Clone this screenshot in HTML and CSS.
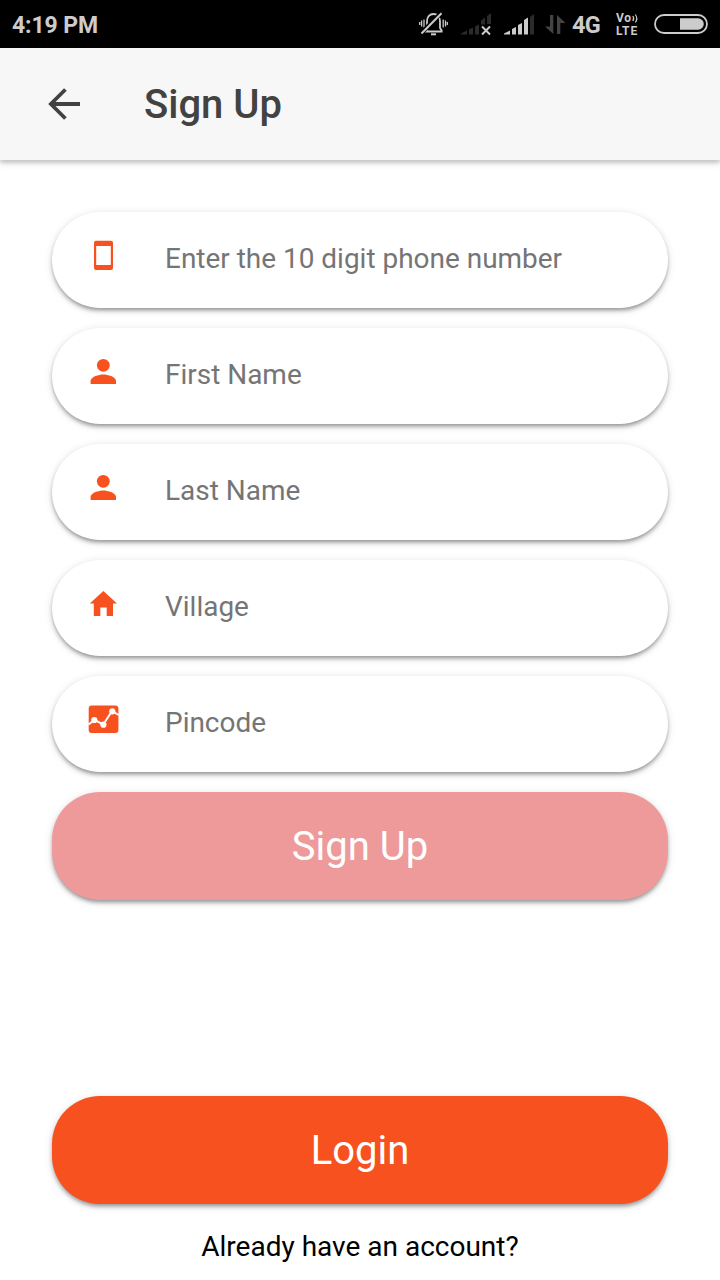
FILE: index.html
```html
<!DOCTYPE html>
<html lang="en">
<head>
<meta charset="utf-8">
<title>Sign Up</title>
<link rel="stylesheet" href="styles.css">
</head>
<body>
<div class="screen">
  <div class="status">
    <span class="time">4:19 PM</span>
    <div class="indicators">
      <svg class="bell" width="30" height="24" viewBox="0 0 30 24" fill="none" stroke="#ccc" stroke-width="1.800">
        <path d="M5.500 19.500h18M8 19V9.500C8 5 10.500 2 14.500 2s6.500 3 6.500 7.500V16l2 3"/>
        <path d="M12 22.300h5" stroke-width="2"/>
        <path d="M5 7.500v8M24.200 7.500v8M2.600 8.500v6M26.500 8.500v6M.7 10v3M28.300 10v3" stroke-width="1.300"/>
        <path d="M3 20.500 21.500 1.500" stroke="#000" stroke-width="4.500"/>
        <path d="M2.500 21.500 22.500 1.200" stroke-width="2"/>
      </svg>
      <svg class="signal-off" width="31" height="22" viewBox="0 0 31 22">
        <path fill="#2b2b2b" d="M0 20.500v-1l6-3v4zM8 15.500l4-2v7H8zM14 12.500l4-2v10h-4zM20 6.500l4-3v7h-4zM26 2l4-3v11h-4z"/>
        <path stroke="#ccc" stroke-width="2" d="m21 12.500 8 8m0-8-8 8"/>
      </svg>
      <svg class="signal" width="30" height="22" viewBox="0 0 30 22">
        <path fill="#ccc" d="M0 20.500v-1l6-3v4zM8 15l4-2v7.500H8zM14 11l4-2v11.500h-4zM20 6l4-2.500v17h-4z"/>
        <path fill="#2b2b2b" d="m26 3 4-3v20.500h-4z"/>
      </svg>
      <svg class="data" width="21" height="20" viewBox="0 0 21 20" fill="#444">
        <path d="M5 0h3.300v19L0 11.500h5zM12 0v19h3.300V8h5.200z"/>
      </svg>
      <span class="network">4G</span>
      <div class="volte">
        <span class="vo">Vo<svg width="6" height="9" viewBox="0 0 6 9" fill="none" stroke="#ccc" stroke-width="1.200"><path d="M.8 2q1.800 2.500 0 5M3.300 .5q3 4 0 8"/></svg></span>
        <span class="lte">LTE</span>
      </div>
      <svg class="battery" width="54" height="20" viewBox="0 0 54 20">
        <rect x="1" y="1" width="52" height="18" rx="9" fill="none" stroke="#ccc" stroke-width="1.800"/>
        <path fill="#ccc" d="M26 4.200h18a5.800 5.800 0 0 1 0 11.600H26z"/>
      </svg>
    </div>
  </div>
  <header class="bar">
    <svg class="back" width="32" height="32" viewBox="0 0 32 32" fill="none" stroke="#424242" stroke-width="3.800"><path d="M32 16H3M17.400 1.500 2.900 16l14.500 14.500"/></svg>
    <h1 class="title">Sign Up</h1>
  </header>
  <main class="form">
    <div class="field">
      <svg class="icon" viewBox="0 0 32 32"><path fill="#f6511e" fill-rule="evenodd" d="M8 1.700h15a2 2 0 0 1 2 2V29a2 2 0 0 1-2 2H8a2 2 0 0 1-2-2V3.700a2 2 0 0 1 2-2zM8.200 7v19h14.600V7z"/></svg>
      <span class="hint">Enter the 10 digit phone number</span>
    </div>
    <div class="field">
      <svg class="icon" viewBox="0 0 32 32" fill="#f6511e"><circle cx="15.300" cy="10.300" r="6.400"/><path d="M2.600 29v-3.200c0-4.200 8.500-6.400 12.700-6.400S28 21.600 28 25.800V29z"/></svg>
      <span class="hint">First Name</span>
    </div>
    <div class="field">
      <svg class="icon" viewBox="0 0 32 32" fill="#f6511e"><circle cx="15.300" cy="10.300" r="6.400"/><path d="M2.600 29v-3.200c0-4.200 8.500-6.400 12.700-6.400S28 21.600 28 25.800V29z"/></svg>
      <span class="hint">Last Name</span>
    </div>
    <div class="field">
      <svg class="icon" viewBox="0 0 32 32"><path fill="#f6511e" d="M15.400 4 29 16.600h-4V29h-6.300v-8.500h-6.400V29H5.800V16.600h-4z"/></svg>
      <span class="hint">Village</span>
    </div>
    <div class="field">
      <svg class="icon" viewBox="0 0 32 32"><rect x=".7" y="2.600" width="29.700" height="27.400" rx="3" fill="#f6511e"/><path d="m.5 21.500 6-4.500 8.800 4.500L24 8l6.600 4" fill="none" stroke="#fff" stroke-width="2"/><g fill="#fff"><circle cx="6.300" cy="17" r="3.100"/><circle cx="15.400" cy="21.700" r="3.100"/><circle cx="24.300" cy="8.300" r="3.100"/></g></svg>
      <span class="hint">Pincode</span>
    </div>
    <button class="button disabled">Sign Up</button>
  </main>
  <footer class="foot">
    <button class="button">Login</button>
    <p class="note">Already have an account?</p>
  </footer>
</div>
</body>
</html>
```
FILE: styles.css
```css
* { box-sizing: border-box; }
body { margin: 0; font-family: Roboto, sans-serif; background: #fff; }
.screen { width: 720px; height: 1280px; display: flex; flex-direction: column; overflow: hidden; }
.status { height: 48px; flex: none; background: #000; color: #ccc; display: flex; justify-content: space-between; padding: 0 12px; font-weight: 700; line-height: 50px; }
.time { font-size: 23px; line-height: 52px; letter-spacing: -0.100px; }
.indicators { display: flex; align-items: flex-start; }
.indicators svg { display: block; flex: none; overflow: visible; }
.bell { margin: 12px 12px 0 0; }
.signal-off { margin: 14px 12px 0 0; }
.signal { margin: 14px 11px 0 0; }
.data { margin: 15px 6px 0 0; }
.network { width: 29px; font-size: 23.500px; letter-spacing: -0.800px; }
.volte { width: 24px; margin: 12px 14px 0 15px; display: flex; flex-direction: column; }
.vo { display: flex; align-items: center; height: 12px; font-size: 12px; line-height: 12px; letter-spacing: 0.700px; }
.lte { height: 13px; font-size: 12px; line-height: 14px; letter-spacing: 0.900px; }
.battery { margin-top: 14px; }
.bar { height: 112px; flex: none; display: flex; align-items: center; gap: 64px; padding-left: 48px; background: #f7f7f7; box-shadow: 0 3px 3px rgba(0,0,0,.12), 0 3px 7px rgba(0,0,0,.14); }
.title { margin: 2px 0 0; font-size: 40px; font-weight: 500; line-height: 48px; color: #424242; }
.form { padding: 52px 52px 0; display: flex; flex-direction: column; gap: 20px; }
.field { height: 96px; border-radius: 48px; background: #fff; display: flex; gap: 45px; padding: 27px 36px 0; box-shadow: 0 3px 4px -1px rgba(0,0,0,.38), 0 2px 8px rgba(0,0,0,.14); }
.icon { width: 32px; height: 32px; flex: none; }
.hint { margin-top: 4px; font-size: 27.960px; line-height: 32px; color: #757575; white-space: nowrap; }
.button { display: block; width: 100%; height: 108px; border: 0; border-radius: 48px; padding: 2px 0 0; background: #f6511e; color: #fff; font: 400 40px/48px Roboto, sans-serif; box-shadow: 0 3px 4px -1px rgba(0,0,0,.38), 0 2px 8px rgba(0,0,0,.14); }
.disabled { background: #ee9a9b; }
.foot { margin-top: auto; padding: 0 52px 17px; }
.note { margin: 26px 0 0; font-size: 28px; line-height: 33px; text-align: center; color: #000; }
```
